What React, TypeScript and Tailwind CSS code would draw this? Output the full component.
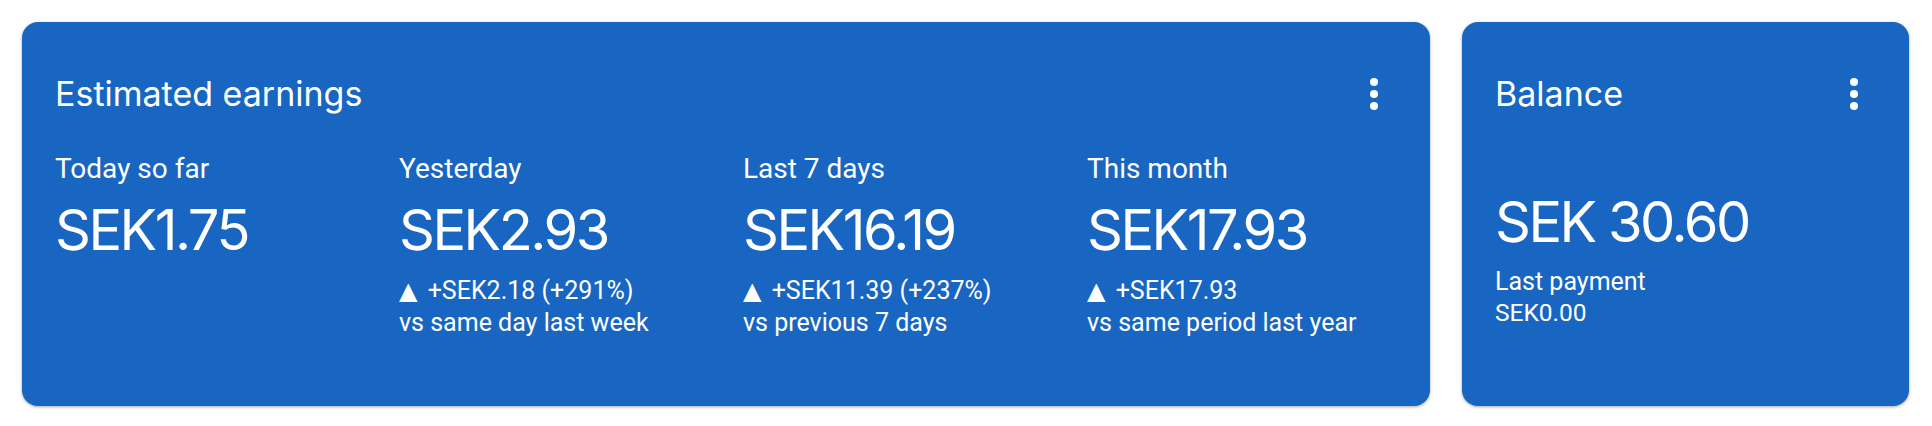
import React from 'react';

const display = "font-['Inter','Roboto',sans-serif]";
const body = "font-['Roboto','Liberation_Sans',sans-serif]";

function MoreIcon() {
  return (
    <svg width="48" height="48" viewBox="0 0 24 24" className="shrink-0 fill-white">
      <circle cx="12" cy="6" r="2" />
      <circle cx="12" cy="12" r="2" />
      <circle cx="12" cy="18" r="2" />
    </svg>
  );
}

interface Stat {
  label: string;
  value: string;
  delta?: string;
  compare?: string;
}

const stats: Stat[] = [
  { label: 'Today so far', value: 'SEK1.75' },
  { label: 'Yesterday', value: 'SEK2.93', delta: '+SEK2.18 (+291%)', compare: 'vs same day last week' },
  { label: 'Last 7 days', value: 'SEK16.19', delta: '+SEK11.39 (+237%)', compare: 'vs previous 7 days' },
  { label: 'This month', value: 'SEK17.93', delta: '+SEK17.93', compare: 'vs same period last year' },
];

function CardHeader({ title }: { title: string }) {
  return (
    <div className="flex h-[48px] items-center justify-between">
      <h2 className={`${display} text-[34px] leading-[48px] font-normal tracking-[0px]`}>{title}</h2>
      <MoreIcon />
    </div>
  );
}

export default function App() {
  return (
    <div className="min-h-[426px] bg-white">
      <div className="flex gap-[32px] pl-[22px] pt-[22px]">
        {/* Estimated earnings */}
        <div className="h-[384px] w-[1408px] rounded-[16px] bg-[#1866c1] pt-[48px] pl-[33px] pr-[32px] text-white shadow-[0_1px_3px_rgba(0,0,0,0.35)]">
          <CardHeader title="Estimated earnings" />
          <div className="mt-[33px] grid grid-cols-[344px_344px_344px_1fr]">
            {stats.map((s) => (
              <div key={s.label} className="flex flex-col">
                <div className={`${body} text-[28px] leading-[36px]`}>{s.label}</div>
                <div className={`${display} mt-[11px] text-[56px] leading-[64px] tracking-[-2.5px]`}>{s.value}</div>
                {s.delta && (
                  <div className={`${body} mt-[13px] text-[25px] leading-[32px]`}>
                    <span className="mr-[4px] inline-block font-['DejaVu_Sans',sans-serif] text-[24px] leading-none">▲</span> {s.delta}
                  </div>
                )}
                {s.compare && <div className={`${body} text-[25px] leading-[32px]`}>{s.compare}</div>}
              </div>
            ))}
          </div>
        </div>

        {/* Balance */}
        <div className="h-[384px] w-[447px] rounded-[16px] bg-[#1866c1] pt-[48px] pl-[33px] pr-[31px] text-white shadow-[0_1px_3px_rgba(0,0,0,0.35)]">
          <CardHeader title="Balance" />
          <div className={`${display} mt-[72px] text-[56px] leading-[64px] tracking-[-2.5px]`}>SEK 30.60</div>
          <div className={`${body} mt-[12px] text-[25px] leading-[31px]`}>Last payment</div>
          <div className={`${body} text-[24.5px] leading-[31px]`}>SEK0.00</div>
        </div>
      </div>
    </div>
  );
}
